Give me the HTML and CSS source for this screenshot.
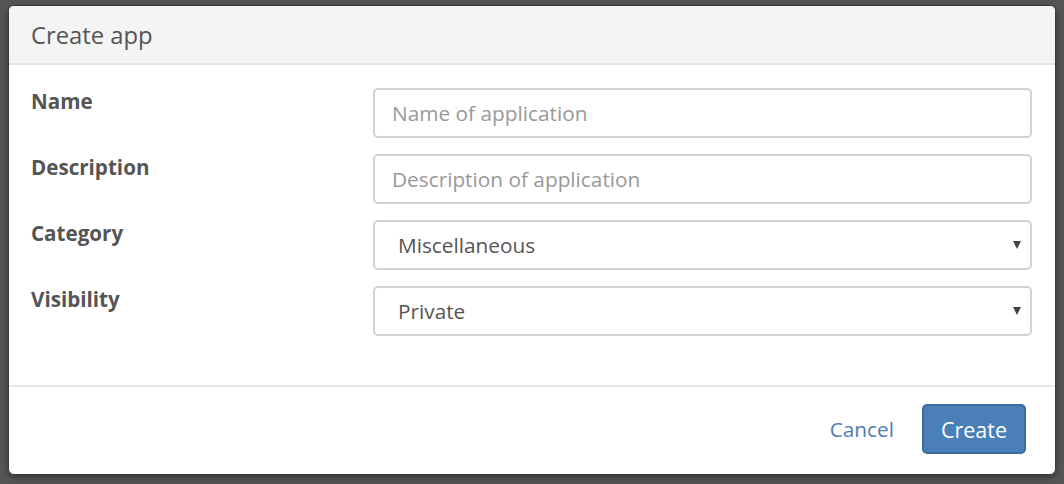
FILE: index.html
```html
<!DOCTYPE html>
<html>
<head>
<meta charset="utf-8">
<link rel="stylesheet" href="styles.css">
</head>
<body>
<div class="modal">
  <div class="modal-header">
    <h4 class="modal-title">Create app</h4>
  </div>
  <form class="modal-body">
    <div class="form-row">
      <label class="form-label">Name</label>
      <input class="form-control" type="text" placeholder="Name of application">
    </div>
    <div class="form-row">
      <label class="form-label">Description</label>
      <input class="form-control" type="text" placeholder="Description of application">
    </div>
    <div class="form-row">
      <label class="form-label">Category</label>
      <div class="select"><span class="select-value">Miscellaneous</span><span class="caret"></span></div>
    </div>
    <div class="form-row">
      <label class="form-label">Visibility</label>
      <div class="select"><span class="select-value">Private</span><span class="caret"></span></div>
    </div>
  </form>
  <div class="modal-footer">
    <a class="btn-link">Cancel</a>
    <button class="btn-primary" type="button">Create</button>
  </div>
</div>
</body>
</html>
```

FILE: styles.css
```css
html, body {
  margin: 0;
  padding: 0;
}
body {
  background: #555555;
  padding: 5px 8px 8px 8px;
  font-family: "Open Sans", "Noto Sans", sans-serif;
  color: #555;
  box-sizing: border-box;
  height: 484px;
}
.modal {
  background: #fff;
  border: 1px solid #3a3a3a;
  border-radius: 6px;
  box-shadow: 0 2px 6px rgba(0,0,0,.4);
  height: 470px;
  box-sizing: border-box;
  display: flex;
  flex-direction: column;
  overflow: hidden;
}
.modal-header {
  background: #f4f4f4;
  border-bottom: 2px solid #e5e5e5;
  height: 57px;
  padding: 0 22px;
  display: flex;
  align-items: center;
}
.modal-title {
  margin: 0;
  font-weight: 400;
  font-size: 23.8px;
  color: #555;
}
.modal-body {
  margin: 0;
  padding: 23px 23px 0 22px;
  flex: 1;
  display: flex;
  flex-direction: column;
  gap: 16px;
}
.form-row {
  display: grid;
  grid-template-columns: 342px 1fr;
  align-items: start;
}
.form-label {
  font-weight: 700;
  font-size: 20.6px;
  line-height: 27px;
  color: #555;
}
.form-control, .select {
  height: 50px;
  box-sizing: border-box;
  border: 2px solid #d2d2d2;
  border-radius: 5px;
  background: #fff;
  font-family: inherit;
  font-size: 20.8px;
  color: #555;
  width: 100%;
}
.form-control {
  padding: 0 17px;
  outline: none;
}
.form-control::placeholder {
  color: #999;
}
.select {
  display: flex;
  align-items: center;
  justify-content: space-between;
  padding: 0 9px 0 23px;
}
.caret {
  width: 0;
  height: 0;
  border-left: 4.5px solid transparent;
  border-right: 4.5px solid transparent;
  border-top: 8px solid #444;
}
.modal-footer {
  border-top: 2px solid #e5e5e5;
  height: 89px;
  box-sizing: border-box;
  display: flex;
  align-items: flex-start;
  justify-content: flex-end;
  padding: 17px 29px 0 0;
  gap: 28px;
}
.btn-link {
  font-size: 20.8px;
  color: #4f7cb3;
  line-height: 50px;
  cursor: pointer;
}
.btn-primary {
  height: 50px;
  width: 104px;
  box-sizing: border-box;
  background: #4a7fb8;
  border: 2px solid #3d6b9e;
  border-radius: 5px;
  color: #fff;
  font-family: inherit;
  font-size: 21.5px;
  padding: 0;
}
```
